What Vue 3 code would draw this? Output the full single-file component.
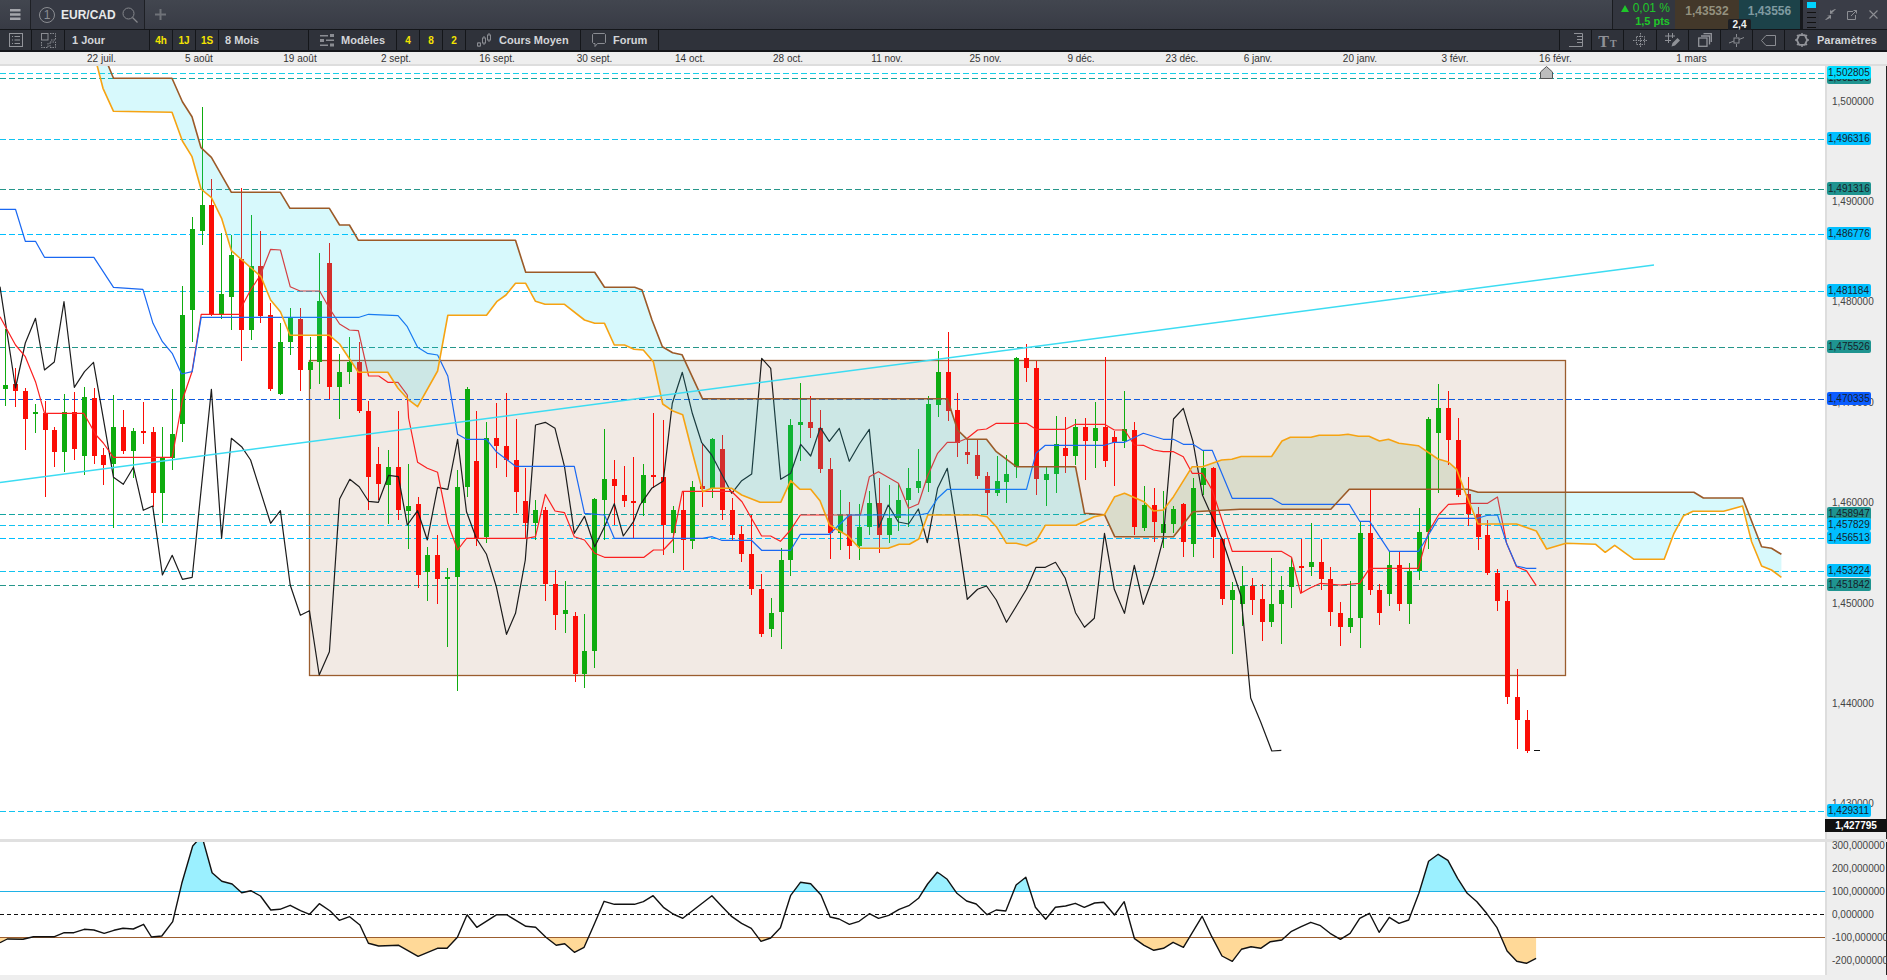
<template>
  <div class="page">
    <header class="topbar">
      <div class="menu">
        <svg width="11" height="11" viewBox="0 0 11 11"><path d="M0 1.200h10.500M0 5.500h10.500M0 9.800h10.500" stroke="#a4a6ab" stroke-width="2.400" /></svg>
      </div>
      <div class="tab">
        <span class="num">1</span>
        <span class="symbol">EUR/CAD</span>
        <svg width="16" height="16" viewBox="0 0 16 16" fill="none"><circle cx="6.5" cy="6.5" r="5.5" stroke="#85878c" /><path d="M10.5 10.5l5 5" stroke="#85878c" stroke-width="1.3" /></svg>
      </div>
      <div class="add">
        <svg width="11" height="11" viewBox="0 0 11 11"><path d="M0 5.5h11M5.5 0v11" stroke="#6f7278" stroke-width="2" /></svg>
      </div>
      <div class="grow"></div>
      <div class="change">
        <div class="pct"><i class="tri"></i>0,01 %</div>
        <div class="pts">1,5 pts</div>
      </div>
      <div class="quote sell">1,43532</div>
      <div class="quote buy">1,43556</div>
      <div class="levels"><i></i></div>
      <div class="win">
        <svg width="11" height="11" viewBox="0 0 11 11" fill="#8d8f94"><path d="M0 11l4-4H1.500L6 6v4.500L5 9 1 11zM11 0L7 4h2.500L5 5V.500L6 2l4-2z" /></svg>
        <svg width="10" height="10" viewBox="0 0 10 10" fill="none" stroke="#8d8f94"><path d="M6 1.500H.500v8h8V5M4 6l5.500-5.500M6.500.500h3v3" /></svg>
        <svg width="9" height="9" viewBox="0 0 9 9"><path d="M.500.500l8 8M8.500.500l-8 8" stroke="#8d8f94" stroke-width="1.100" /></svg>
      </div>
    </header>

    <div class="tip">2,4</div>

    <nav class="toolbar">
      <div class="cell w32">
        <svg width="14" height="14" viewBox="0 0 14 14" fill="none" stroke="#92949a"><rect x=".5" y=".5" width="13" height="13" /><path d="M3 3.500h1M5.500 3.500H11M3 7h1M5.500 7H11M3 10.500h1M5.500 10.500H11" /></svg>
      </div>
      <div class="cell w33">
        <svg width="15" height="15" viewBox="0 0 15 15" fill="none" stroke="#8a8c92"><rect x=".5" y=".5" width="6.500" height="6.500" /><path d="M9 .5h5.500V7H9M.5 9v5.500H7V9M9 9h5.500v5.500H9z" stroke-dasharray="1.500 1" /></svg>
      </div>
      <div class="cell w85 pad7">1 Jour</div>
      <div class="cell w23 tf">4h</div>
      <div class="cell w23 tf">1J</div>
      <div class="cell w23 tf">1S</div>
      <div class="cell w90 pad6">8 Mois</div>
      <div class="cell w88 pad11">
        <svg width="14" height="13" viewBox="0 0 14 13" fill="#8a8c92"><path d="M0 1h8v1.500H0zM10 0h4v3h-4zM6 5.500h8V7H6zM0 5h4v3H0zM0 10.500h8V12H0zM10 9.500h4v3h-4z" /></svg>
        Modèles
      </div>
      <div class="cell w23 tf">4</div>
      <div class="cell w23 tf">8</div>
      <div class="cell w23 tf">2</div>
      <div class="cell w115 pad11 gap8">
        <svg width="14" height="15" viewBox="0 0 14 15" fill="none" stroke="#8a8c92"><path d="M2 9v5M7 3v9M12 0v9" /><rect x=".5" y="10" width="3" height="3" fill="#2f323a" /><rect x="5.500" y="5" width="3" height="5" fill="#2f323a" /><rect x="10.500" y="2" width="3" height="5" fill="#2f323a" /></svg>
        Cours Moyen
      </div>
      <div class="cell w78 pad11">
        <svg width="14" height="14" viewBox="0 0 14 14" fill="none" stroke="#8a8c92"><path d="M1.500.500h11l1 1v8l-1 1H5.500L3 13.500v-3H1.500l-1-1v-8z" /></svg>
        Forum
      </div>
      <div class="grow sep"></div>
      <div class="cell w32">
        <svg width="14" height="14" viewBox="0 0 14 14" fill="none" stroke="#8f9197"><path d="M5 .5h8.500v13H0M8 3.500h5.500M8 6.500h5.500M8 9.500h5.500" /></svg>
      </div>
      <div class="cell w32 tt"><b>T</b><small>T</small></div>
      <div class="cell w33">
        <svg width="15" height="15" viewBox="0 0 15 15" fill="none" stroke="#8f9197" stroke-dasharray="1.500 1"><rect x="3.500" y="3.500" width="8" height="8" /><path d="M0 7.500h15M7.500 0v15" /></svg>
      </div>
      <div class="cell w32">
        <svg width="15" height="14" viewBox="0 0 15 14" fill="none"><path d="M3.500 0v10M7.500 0v5M0 3h10M0 7.500h6" stroke="#8f9197" /><path d="M6.500 13.500l1-3.500 5-5 2.500 2.500-5 5z" fill="#8f9197" /></svg>
      </div>
      <div class="cell w32">
        <svg width="14" height="14" viewBox="0 0 14 14" fill="none" stroke="#92949a" stroke-width="1.300"><rect x=".7" y="5" width="8.300" height="8.300" /><path d="M3 3h8.500v8.500M5.500.7h7.800V9" /></svg>
      </div>
      <div class="cell w32">
        <svg width="15" height="13" viewBox="0 0 15 13" fill="none" stroke="#8a8c92"><path d="M0 9l5-2M10 5.500l5-2M7.500 0v3M7.500 10v3" /><rect x="5" y="4" width="5" height="5" /></svg>
      </div>
      <div class="cell w32">
        <svg width="15" height="11" viewBox="0 0 15 11" fill="none" stroke="#8a8c92"><path d="M14.500.5H5L.5 5.500 5 10.500h9.500z" /></svg>
      </div>
      <div class="cell w102 pad10 gap8">
        <svg width="14" height="14" viewBox="0 0 14 14" fill="none" stroke="#92949a"><path d="M4.200 2.200h5.600L12.200 7l-2.400 4.800H4.200L1.800 7z" stroke-width="1.800" /><path d="M7 0v2M7 12v2M0 7h2M12 7h2M2 2l1.500 1.500M10.500 10.500L12 12M2 12l1.500-1.500M10.500 3.500L12 2" stroke-width="1.500" /></svg>
        Paramètres
      </div>
    </nav>

    <div class="dates">
      <span v-for="d in dates" :key="d.t" class="date" :style="{ left: d.x + 'px' }">{{ d.t }}</span>
    </div>

    <section class="chart-row">
      <svg class="plot" width="1825" height="773" viewBox="0 66 1825 773">
        <rect x="309.500" y="360.500" width="1256" height="315" fill="rgba(155,93,46,0.13)" stroke="#9b5d2e" stroke-width="1.300" />
        <line v-for="l in levels" :key="l.v" x1="0" x2="1825" :y1="l.y" :y2="l.y" :stroke="l.line" stroke-dasharray="6 3" />
        <polygon :points="cloudUp" fill="#dadccb" />
        <g shape-rendering="crispEdges">
          <g v-for="c in candleRects" :key="c.x" :fill="c.color">
            <rect :x="c.x" :y="c.wt" width="1" :height="c.wh" />
            <rect :x="c.x - 2" :y="c.bt" width="5" :height="c.bh" />
          </g>
          <rect x="1534" y="750" width="6" height="1" fill="#111" />
        </g>
        <polyline :points="chikou" class="ln" stroke="#1c1c1c" />
        <polyline :points="tenkan" class="ln" stroke="#fb2020" />
        <polyline :points="kijun" class="ln" stroke="#1a68f2" />
        <polygon :points="cloudDownA" fill="rgba(20,220,235,0.17)" />
        <polygon :points="cloudDownB" fill="rgba(20,220,235,0.17)" />
        <polyline :points="spanB" class="ln thick" stroke="#9b5a28" />
        <polyline :points="spanA" class="ln thick" stroke="#f6a312" />
        <line x1="0" y1="482.500" x2="1654" y2="265" stroke="#3cdcf2" stroke-width="1.500" />
        <polygon points="1540.5,72 1546.5,66.500 1552.5,72 1552.5,78.500 1540.5,78.500" fill="#bdbdbd" stroke="#555" />
      </svg>
      <aside class="price-axis">
        <span v-for="t in ticks" :key="t.t" class="tick" :style="{ top: t.y - 72.5 + 'px' }">{{ t.t }}</span>
        <span v-for="l in levels" :key="l.v" class="level" :style="{ top: l.y - 74 + 'px', background: l.bg }">{{ l.v }}</span>
        <span class="last">1,427795</span>
      </aside>
    </section>

    <div class="divider"></div>

    <section class="sub-row">
      <svg class="plot" width="1825" height="133" viewBox="0 842 1825 133">
        <defs>
          <clipPath id="above"><rect x="0" y="842" width="1825" height="49.500" /></clipPath>
          <clipPath id="below"><rect x="0" y="937" width="1825" height="38" /></clipPath>
        </defs>
        <polygon :points="cciFillHigh" fill="#9bf0ff" clip-path="url(#above)" />
        <polygon :points="cciFillLow" fill="#ffd998" clip-path="url(#below)" />
        <line x1="0" x2="1825" y1="891.500" y2="891.500" stroke="#1fb2e6" />
        <line x1="0" x2="1825" y1="914.500" y2="914.500" stroke="#111" stroke-dasharray="4 3" />
        <line x1="0" x2="1825" y1="937.500" y2="937.500" stroke="#9b5d2e" />
        <polyline :points="cciLine" class="ln cci" stroke="#111" />
      </svg>
      <aside class="price-axis">
        <span v-for="t in cciTicks" :key="t.t" class="tick" :style="{ top: t.y - 848.5 + 'px' }">{{ t.t }}</span>
      </aside>
    </section>

    <div class="bottom"></div>
  </div>
</template>

<script setup>
const dates = [
  { t: '22 juil.', x: 101.5 }, { t: '5 août', x: 199 }, { t: '19 août', x: 300 }, { t: '2 sept.', x: 396 },
  { t: '16 sept.', x: 497 }, { t: '30 sept.', x: 594.5 }, { t: '14 oct.', x: 690 }, { t: '28 oct.', x: 788 },
  { t: '11 nov.', x: 887 }, { t: '25 nov.', x: 985.5 }, { t: '9 déc.', x: 1081 }, { t: '23 déc.', x: 1182 },
  { t: '6 janv.', x: 1258 }, { t: '20 janv.', x: 1360 }, { t: '3 févr.', x: 1455 }, { t: '16 févr.', x: 1555.5 },
  { t: '1 mars', x: 1691.5 }
]

const TEAL = '#1f9490'
const SKY = '#00bfff'
const levels = [
  { v: '1,502300', y: 78.5, line: '#14a5a0', bg: TEAL },
  { v: '1,502805', y: 73.5, line: '#18cfe8', bg: '#00dcff' },
  { v: '1,496316', y: 139.5, line: '#12c3f0', bg: SKY },
  { v: '1,491316', y: 189.5, line: '#26968a', bg: TEAL },
  { v: '1,486776', y: 234.5, line: '#00bfff', bg: SKY },
  { v: '1,481184', y: 291.5, line: '#12c3f0', bg: SKY },
  { v: '1,475526', y: 347.5, line: '#26968a', bg: TEAL },
  { v: '1,470335', y: 399.5, line: '#0f5be0', bg: '#0a5cff' },
  { v: '1,458947', y: 514.5, line: '#14a5a0', bg: TEAL },
  { v: '1,457829', y: 525.5, line: '#12c3f0', bg: SKY },
  { v: '1,456513', y: 538.5, line: '#00bfff', bg: SKY },
  { v: '1,453224', y: 571.5, line: '#12c3f0', bg: SKY },
  { v: '1,451842', y: 585.5, line: '#26968a', bg: TEAL },
  { v: '1,429311', y: 811.5, line: '#12c3f0', bg: SKY }
]

const ticks = [
  { t: '1,500000', y: 101.5 }, { t: '1,490000', y: 201.5 }, { t: '1,480000', y: 301.5 }, { t: '1,470000', y: 402 },
  { t: '1,460000', y: 502 }, { t: '1,450000', y: 603.5 }, { t: '1,440000', y: 703 }, { t: '1,430000', y: 803 }
]
const cciTicks = [
  { t: '300,000000', y: 845 }, { t: '200,000000', y: 868 }, { t: '100,000000', y: 891 },
  { t: '0,000000', y: 914 }, { t: '-100,000000', y: 937 }, { t: '-200,000000', y: 960 }
]

// wick top, body top, body bottom, wick bottom, green?
const candles = [
  [329,385,389,406,1],[368,384,391,407,0],[388,391,419,450,0],[404,412,414,433,1],[401,413,430,497,0],
  [427,430,452,467,0],[394,412,452,472,1],[392,412,449,460,0],[387,397,456,475,1],[388,398,456,464,0],
  [448,455,465,485,0],[395,427,464,528,1],[410,427,451,454,0],[428,431,451,478,1],[402,431,433,444,0],
  [427,432,493,507,0],[427,458,493,523,1],[389,434,458,470,1],[286,315,424,442,1],[217,229,310,342,1],
  [107,205,231,245,1],[179,205,314,316,0],[233,294,314,319,1],[235,255,297,330,1],[188,259,330,361,0],
  [215,266,330,340,1],[231,266,316,323,0],[303,315,389,391,0],[323,342,394,395,1],[308,317,342,355,1],
  [308,319,370,391,0],[337,362,370,389,1],[253,301,362,384,1],[243,263,387,399,0],[354,372,387,419,1],
  [337,362,372,384,1],[342,362,411,413,0],[401,411,477,510,0],[447,464,484,500,0],[450,467,485,524,1],
  [411,467,510,520,0],[464,506,511,549,1],[497,504,575,588,0],[547,555,572,601,1],[535,555,579,604,0],
  [568,577,579,647,1],[470,487,577,691,1],[387,389,487,497,1],[411,461,538,546,0],[422,438,537,543,1],
  [403,438,446,468,0],[393,446,460,477,0],[419,460,492,513,0],[468,501,523,539,0],[500,510,523,540,1],
  [507,510,584,601,0],[570,584,615,630,0],[581,610,614,633,1],[612,616,674,682,0],[614,651,674,688,1],
  [498,499,651,668,1],[429,479,500,540,1],[460,479,486,525,0],[466,495,501,507,0],[457,501,503,538,0],
  [464,475,503,516,1],[413,475,477,488,0],[420,477,525,555,0],[506,510,533,553,1],[492,510,540,570,0],
  [481,487,541,549,1],[444,486,489,507,0],[438,439,488,498,1],[435,449,510,520,0],[498,510,535,540,0],
  [526,534,554,562,0],[515,554,589,595,0],[574,589,634,637,0],[598,613,629,637,1],[548,560,612,649,1],
  [419,425,560,576,1],[383,422,425,461,1],[396,422,428,438,0],[410,428,469,473,0],[458,469,533,559,0],
  [490,515,533,550,1],[502,515,546,559,0],[504,527,546,560,1],[491,503,527,535,1],[478,503,535,553,0],
  [485,518,535,543,1],[483,500,518,531,1],[468,488,500,527,1],[449,481,488,493,1],[396,404,483,492,1],
  [351,372,405,417,1],[332,372,411,421,0],[393,410,443,457,0],[439,452,455,464,0],[440,455,476,479,0],
  [472,476,493,515,0],[456,481,493,496,1],[455,474,482,503,1],[357,358,467,478,1],[344,358,368,382,0],
  [361,368,479,495,0],[467,474,480,506,1],[416,444,474,493,1],[417,448,456,473,0],[419,427,456,465,1],
  [418,427,441,480,0],[402,428,441,468,1],[357,427,461,467,0],[431,437,443,486,0],[391,429,441,448,1],
  [422,430,527,535,0],[486,505,528,531,1],[488,505,522,542,0],[491,524,533,548,1],[506,509,524,533,1],
  [503,504,542,557,0],[478,488,544,557,1],[450,468,485,495,1],[467,468,537,558,0],[538,539,599,605,0],
  [582,590,600,654,1],[566,586,604,626,1],[578,586,600,615,0],[584,599,622,641,0],[558,604,622,627,1],
  [576,590,604,644,1],[558,567,587,608,1],[539,566,568,593,0],[523,562,567,576,1],[539,562,579,590,0],
  [567,579,612,626,0],[602,613,627,646,0],[581,618,627,633,1],[521,533,618,648,1],[490,533,590,595,0],
  [584,590,613,625,0],[552,565,594,606,1],[552,565,604,611,0],[563,571,604,624,1],[508,532,571,580,1],
  [417,419,532,549,1],[384,408,433,493,1],[391,408,440,465,0],[418,440,495,497,0],[477,494,514,526,0],
  [507,514,537,550,0],[520,535,573,575,0],[569,573,601,611,0],[590,601,697,704,0],[669,697,720,749,0],
  [710,720,751,753,0]
]

const candleRects = candles.map(([wt, bt, bb, wb, green], i) => ({
  x: Math.round(5.3 + 9.815 * i),
  wt,
  wh: wb - wt,
  bt,
  bh: bb - bt,
  color: green ? '#0fac0f' : '#fb0d06'
}))

const spanB = '108,65 113.5,78.3 172,78.3 182.4,101.7 192,116.7 201,147.7 211.4,157.3 231.4,192.3 280.4,192.3 290,208.3 329.4,208.3 339.6,225 349.4,225 358.4,240.3 515.5,240.3 525.7,272.3 594.7,272.3 604.5,287.3 634.7,287.3 642,290 652,320 662.4,346.7 672.6,352.7 682,354.7 702.4,398.7 947.3,398.7 957.6,430 967.3,439.3 986.5,439.3 996.3,451.7 1016.3,466.7 1075.5,466.7 1084.5,513.3 1104.5,514.7 1114.7,536.7 1173.5,536.7 1193,511.7 1240,509.3 1330.8,509.3 1349.3,489.3 1464,489.3 1467.8,489.3 1478,492.3 1693.9,492.3 1703.4,498 1742.6,498 1761.6,546.7 1771.5,548.3 1781.4,554.3'
const spanA = '97,65 103,88.3 113.5,111.3 172,112.3 182.4,141 192,156.7 201,189 211.4,197.7 221.6,218.3 231.4,250.7 261,276.7 270.6,300 280.4,311.7 290,335.3 329.4,335.3 339.6,344 358.4,372.3 387.8,372.3 398,388.3 408,399.3 417.6,406.7 437.6,371 447.8,315.3 486.5,315.3 496.7,301.7 506,295 515.5,283.3 525.7,283.3 535.5,301.3 545,304.3 564.5,304.3 584.5,320 594.7,323.3 604.5,323.3 614.3,345 624.5,345 634,349.3 643.3,350 653.3,361.7 662.7,404 672.3,410.7 682.7,414.7 691,447.3 702.7,491.7 711.7,488.3 731.7,488.3 741.7,495 760,502.3 780.7,502.3 790.7,480.7 800,489.3 810.7,489.3 820,500.7 829.5,525 848,536 859.6,548.3 888.2,548.3 899.2,544.3 909.4,544.3 918.8,539 927.8,515 976.7,515 987,516.7 996.3,526.7 1006.5,543.3 1016.3,543.3 1026.5,545.7 1036,541 1045.3,525.3 1076,525.3 1094.3,516.7 1104.5,514.7 1114.7,496.7 1124.5,493.3 1144,501.7 1153.5,511 1163.3,510 1173.5,496.7 1192.2,466.7 1202.4,466.7 1221.6,460 1231.8,459.3 1241.2,456.5 1271.6,456.5 1282,441 1290.3,437.3 1311,437.3 1319.2,435.3 1339,435.3 1348,434.3 1358.4,436.3 1369,436.3 1379.5,441 1388.5,439.3 1398.9,443.3 1418.3,445.7 1438,459 1448.4,462 1456.6,469.3 1464,489.3 1467,496.7 1478,524 1516.5,524 1536.3,531 1546.6,549 1566,543.3 1595.7,544.3 1605.2,552.3 1614.7,545.3 1634,559.3 1664.2,559.3 1674,533.3 1683.6,515.7 1693,511.3 1723.6,511.3 1742.6,506 1751.6,541.7 1761.6,566 1771.5,570 1781.4,577.3'

const tenkan = '0,316.7 15.5,345 25.3,356.7 35.5,381.7 44.5,413.3 83.7,413.3 96,435 103.3,443 113.5,457.3 172.2,457.3 182.4,400 192,371.7 201.2,314.3 240.8,314.3 241,308 250.6,290 260.4,275 270.6,249.3 280.4,250 290.2,286.7 300,291 319.6,291 329.4,308.3 339.6,324 349.4,330 358.4,330.7 368.6,376 378.8,376 387.8,382.3 398,382.3 407.3,395 408.6,418 417.6,462.3 427.3,468.3 437.6,472.3 447.8,523.3 457.6,550 466.5,538.3 526.5,538.3 535.5,536.7 545.3,494.3 555,511 564.5,512.7 574.3,536.7 584.5,540 594.7,553.3 604.5,557.3 644,557.3 653.5,550 663.3,550 672.7,540 682.4,491.3 731.4,491.3 742,501.7 761.6,536 770.6,536 780.4,541.3 790.6,530 800.4,515 860.4,515 869.4,476.7 878.4,471.7 898.4,483.3 908.6,508.3 918.4,504 927.3,476.7 937.6,453.3 947.3,442.3 957.6,442.3 967.3,438.3 977.6,430 986.5,429 996.3,423.3 1026.5,423.3 1036,429.3 1065.7,429.3 1075.5,424.3 1104.5,424.3 1114.3,430 1124.5,430 1134.3,445 1143.3,445.3 1153.5,450 1163.3,451.7 1173.5,451.7 1183.3,456.7 1192.2,473.3 1202.4,473.3 1212.2,490 1232.2,551.3 1281.3,551.3 1291.6,557.3 1300.7,593.3 1310.6,587.7 1320.5,583.3 1340.3,585 1359.7,583.3 1369.6,568.3 1418.3,568.3 1428.6,531.7 1438.5,515 1448.4,504.3 1467.4,503.3 1487.6,503.3 1497.5,497 1506.6,543.3 1516.5,566.7 1526.4,570.7 1536.3,585.7'
const kijun = '0,209.3 15.5,209.3 25.3,241.3 35.5,241.3 44.5,257.3 93.9,257.3 113.5,287.3 142.9,289.3 153,323.3 162.4,341.7 172.2,353.3 181.6,374 192.2,371.7 201.2,317.3 359.2,317.3 368.6,314.3 398,315.7 407.3,326.7 417.6,347.3 427.3,353.3 437.6,355 447.8,376 451.8,400 457.6,434.3 466.5,439.3 486.5,439.3 496.3,451.7 515.5,466.3 574.3,466.3 584.5,513.3 604.5,515 614.3,538.3 702.4,538.3 712.2,536.7 721.6,540.3 751.4,540.3 761.6,550.3 790.6,550.3 800.4,534.3 829.4,534.3 849.4,515 918.8,515 927.8,513.3 937.6,498.3 947.3,489.3 1026.5,489.3 1036,453.3 1045.3,445.3 1104.5,445.3 1114.3,442.3 1124.5,442.3 1143.3,433.3 1163.3,439.3 1173.5,439.3 1183.3,444.3 1193,444.3 1202.4,450.3 1212.2,450.3 1232.2,498.3 1271.8,498.3 1282,504.3 1349.3,504.3 1359.7,521.3 1369.6,521.3 1389.4,551.3 1418.7,551.3 1438.5,518.3 1477.7,518.3 1487.6,515.3 1497.5,515 1506.6,543.3 1516.5,566 1526.4,568.3 1536.3,568.3'
const chikou = '0,286.7 15.5,388 25.3,343 35.5,318.3 44.5,370 54.3,362 64,301.7 74.3,387.3 84.5,371.7 93.5,362.3 103.3,418.3 113.5,477.3 123.3,484.3 133.5,467.3 143.3,510.3 152.7,506 162.4,575 172.2,555.3 182.4,579.3 192.2,577.3 211.4,389.3 221.6,538.3 231.4,438.3 241.6,446.7 250.6,460 270.6,523.3 280.4,510.7 290.2,585 300.4,615.3 309.4,610.7 319.2,675 329.4,651.7 339.6,499 349.8,479.3 359.2,486.7 368.6,501.3 378.4,502.3 388.6,475.3 398.4,476.7 407.3,525 417.6,510.7 427.3,540 437.6,487.3 447.8,489.3 457.6,439.3 466.5,511.7 476.3,538.3 486.5,554.3 496.3,586.7 506.5,634.3 515.5,613.3 525.3,560 535.5,425 545.3,422.3 555,428.3 564.5,466.7 574.3,533.3 584.5,516.3 594.7,546.7 604.5,526.7 614.3,503.7 623.3,536 633.5,521.7 640,505 651.7,488.3 663.3,481 672.3,403.3 682.3,372.3 692.3,413.3 701.7,442.7 711.7,455 731.7,493.3 741.7,480.7 751.7,474 761.7,358.3 770.7,368.3 780.7,479.3 790.7,473.3 800.7,444.3 810.7,456 820.3,427.7 829.3,441.3 839.3,428.3 849.3,461.3 859.3,444 869.3,429.3 878.8,527.3 888.2,505 898.4,522 908.6,524 918.4,509 927.3,542.7 937.6,488.3 947.3,468.3 957.6,533.3 967.3,599.3 977.6,589.3 986.5,586 996.3,600 1006.5,622.3 1026.5,589.3 1036,567.3 1045.3,567.3 1055.5,562.3 1065.3,578.3 1075.5,612.7 1084.5,627.3 1094.3,618.3 1104.5,533.3 1114.3,589.3 1124.5,613.3 1134.3,565.3 1143.3,604.3 1153.5,576 1163.3,538.3 1173.5,419 1183.3,408.3 1193,441.7 1202.4,495 1222.4,540 1241,596 1250.7,698 1260.6,721.7 1271.8,751 1281.3,750.3'

const between = (pts, from, to) => pts.split(' ').filter(p => {
  const x = parseFloat(p)
  return x >= from && x <= to
})
const closed = (top, bottom) => [...top, ...[...bottom].reverse()].join(' ')

const cloudDownA = closed(between(spanB, 0, 1104.5), between(spanA, 0, 1104.5))
const cloudUp = closed(between(spanA, 1104.5, 1464), between(spanB, 1104.5, 1464))
const cloudDownB = closed(between(spanB, 1464, 1900), between(spanA, 1464, 1900))

// cci traced in two runs, x steps differ slightly
const cciA = [[0,368],[12,357],[38,358],[55,350],[90,350],[106,338],[122,338],[139,328],[155,330],[172,340],[188,331],[203,325],[220,327],[237,313],[250,351],[267,348],[285,305],[300,190],[318,78],[327,60],[335,60],[350,158],[366,184],[383,192],[399,218],[414,212],[430,228],[447,270],[462,268],[479,256],[496,272],[511,283],[527,251],[545,273],[560,301],[577,290],[594,315],[608,370],[625,378],[658,376],[690,409],[722,385],[738,385],[755,352],[771,284],[787,322],[820,284],[836,284],[868,319],[884,322],[901,352],[918,376],[932,371],[948,397],[964,382],[980,316],[997,244],[1014,253],[1047,253],[1062,245],[1078,227],[1095,262],[1111,282],[1127,295],[1143,272],[1175,227],[1192,260],[1208,290],[1224,310],[1240,325],[1256,364],[1272,354],[1288,323],[1305,226],[1321,187],[1338,191],[1355,225],[1370,291],[1385,297],[1402,313],[1418,304],[1435,281],[1450,295],[1467,286],[1484,268],[1500,257],[1516,235],[1531,192],[1547,157]]
const cciB = [[0,162],[12,178],[28,220],[44,243],[60,252],[78,284],[93,270],[109,273],[126,195],[142,172],[158,262],[175,298],[191,262],[208,258],[224,250],[239,262],[256,249],[271,247],[289,285],[305,245],[322,356],[338,376],[354,391],[370,385],[386,367],[403,382],[434,289],[450,350],[467,408],[484,424],[499,388],[515,380],[531,385],[547,365],[566,360],[582,334],[598,320],[614,307],[630,317],[646,340],[663,358],[679,340],[695,295],[711,280],[727,337],[744,292],[760,310],[776,300],[793,220],[809,124],[825,103],[841,121],[857,175],[873,220],[889,245],[905,280],[922,322],[939,393],[955,424],[971,430],[987,415]]

const cciPts = [
  ...cciA.map(([x, y]) => [x / 1.6505, 820 + y / 3]),
  ...cciB.map(([x, y]) => [940 + x / 1.6558, 820 + y / 3])
].map(([x, y]) => x.toFixed(1) + ',' + y.toFixed(1))

const cciEnd = cciPts[cciPts.length - 1].split(',')[0]
const cciLine = cciPts.join(' ')
const cciFillHigh = `0,891.5 ${cciLine} ${cciEnd},891.5`
const cciFillLow = `0,937.5 ${cciLine} ${cciEnd},937.5`
</script>

<style scoped>
.page {
  position: relative;
  width: 1887px;
  height: 980px;
  display: flex;
  flex-direction: column;
  overflow: hidden;
  background: #fff;
  font-family: "Liberation Sans", Arial, sans-serif;
}

/* top bar */
.topbar {
  height: 30px;
  box-sizing: border-box;
  display: flex;
  background: linear-gradient(#42464f, #383b45);
  border-bottom: 1px solid #14161a;
}
.grow { flex: 1; }
.menu { width: 31px; box-sizing: border-box; display: flex; align-items: center; justify-content: center; border-right: 1px solid #1e2025; }
.tab { width: 114px; box-sizing: border-box; display: flex; align-items: center; padding-left: 8px; background: #363943; border-right: 1px solid #1e2025; color: #e8e9ea; }
.num { width: 16px; height: 16px; box-sizing: border-box; border: 1px solid #8b8d92; border-radius: 50%; font-size: 12px; line-height: 14px; text-align: center; color: #8b8d92; margin-right: 6px; }
.symbol { font-size: 12px; font-weight: 700; margin-right: 6px; }
.add { width: 30px; display: flex; align-items: center; justify-content: center; }
.change { width: 63px; box-sizing: border-box; background: #33363f; border-left: 1px solid #1a1c20; color: #1fc72a; text-align: right; padding-right: 5px; font-size: 12px; line-height: 13px; padding-top: 2px; }
.pct { font-weight: 400; }
.tri { display: inline-block; width: 0; height: 0; border-left: 4px solid transparent; border-right: 4px solid transparent; border-bottom: 7px solid #1fc72a; margin-right: 4px; }
.pts { font-size: 11px; font-weight: 700; }
.quote { width: 64px; display: flex; align-items: center; justify-content: center; font-size: 12px; font-weight: 700; padding-bottom: 7px; box-sizing: border-box; }
.sell { background: #43382a; color: #94917f; }
.buy { background: #1c4249; color: #7f9aa0; border-right: 3px solid #17191d; }
.levels { width: 16px; box-sizing: border-box; padding: 2px 0 0 4px; background: #383b45; }
.levels i {
  display: block;
  width: 9px;
  height: 27px;
  background: linear-gradient(#00d4ff, #00d4ff) 0 0 / 100% 6px no-repeat, repeating-linear-gradient(#111 0 1px, transparent 1px 5px);
}
.win { width: 68px; display: flex; align-items: center; justify-content: space-around; padding: 0 3px 0 0; box-sizing: border-box; background: #3a3d47; }

.tip {
  position: absolute;
  left: 1728px;
  top: 19px;
  width: 23px;
  height: 11px;
  border-radius: 2px 2px 0 0;
  background: #1d1f24;
  color: #f0f0f0;
  font-size: 10px;
  font-weight: 700;
  line-height: 11px;
  text-align: center;
}

/* second toolbar */
.toolbar {
  height: 22px;
  box-sizing: border-box;
  display: flex;
  background: #2f323a;
  border-bottom: 2px solid #14161a;
  color: #d3d5d8;
  font-size: 11px;
  font-weight: 700;
}
.sep { border-right: 1px solid #14161a; }
.cell {
  box-sizing: border-box;
  display: flex;
  align-items: center;
  justify-content: center;
  gap: 7px;
  border-right: 1px solid #14161a;
}
.w23 { width: 23px; }
.w32 { width: 32px; }
.w33 { width: 33px; }
.w78 { width: 78px; }
.w85 { width: 85px; }
.w88 { width: 88px; }
.w90 { width: 90px; }
.w102 { width: 102px; border-right: 0; }
.w115 { width: 115px; }
.pad6, .pad7, .pad10, .pad11 { justify-content: flex-start; }
.pad6 { padding-left: 6px; }
.pad7 { padding-left: 7px; }
.pad10 { padding-left: 10px; }
.pad11 { padding-left: 11px; }
.gap8 { gap: 8px; }
.tf { color: #f5e400; font-size: 10px; }
.tt { color: #8f9197; gap: 1px; align-items: baseline; padding-top: 3px; font-family: "Liberation Serif", serif; }
.tt b { font-size: 16px; }
.tt small { font-size: 10px; font-weight: 700; }

/* time axis */
.dates {
  position: relative;
  height: 14px;
  box-sizing: border-box;
  background: #eee;
  border-bottom: 2px solid #ddd;
  font-size: 10px;
  line-height: 14px;
  color: #333;
}
.date { position: absolute; top: 0; transform: translateX(-50%); white-space: nowrap; }

/* panes */
.chart-row { height: 773px; display: flex; }
.sub-row { height: 133px; display: flex; }
.plot { display: block; flex: none; overflow: hidden; }
.ln { fill: none; stroke-width: 1.2; stroke-linejoin: round; }
.thick { stroke-width: 1.6; }
.cci { stroke-width: 1.4; }
.divider { height: 3px; background: #e0e0e0; }
.bottom { height: 5px; background: #eee; }

.price-axis {
  position: relative;
  flex: none;
  width: 62px;
  box-sizing: border-box;
  background: #eee;
  border-left: 2px solid #ddd;
  border-right: 1px solid #222;
  font-size: 10px;
  line-height: 13px;
}
.tick { position: absolute; left: 5px; white-space: nowrap; color: #444; }
.level {
  position: absolute;
  left: 0;
  width: 44px;
  height: 13px;
  border-radius: 2px;
  padding-left: 1px;
  box-sizing: border-box;
  color: #16222a;
}
.last {
  position: absolute;
  left: -2px;
  right: -1px;
  bottom: 7px;
  height: 13px;
  background: #111;
  color: #fff;
  font-weight: 700;
  text-align: center;
  z-index: 1;
}
</style>
